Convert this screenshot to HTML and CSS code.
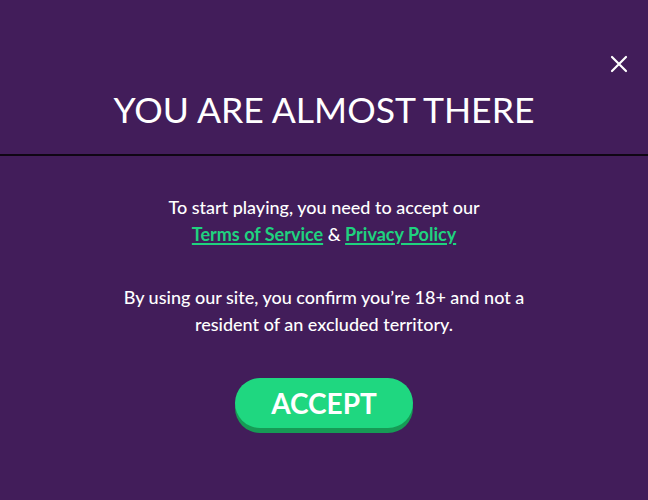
FILE: index.html
```html
<!DOCTYPE html>
<html>
<head>
<meta charset="utf-8">
<link rel="stylesheet" href="styles.css">
</head>
<body>
<div class="modal">
  <button class="close" aria-label="Close">
    <svg width="18" height="18" viewBox="0 0 18 18"><path d="M2 2L16 16M16 2L2 16" stroke="#fff" stroke-width="2.2" stroke-linecap="round"/></svg>
  </button>
  <h1 class="title">YOU ARE ALMOST THERE</h1>
  <div class="divider"></div>
  <p class="text first">To start playing, you need to accept our<br><a href="#">Terms of Service</a> &amp; <a href="#">Privacy Policy</a></p>
  <p class="text second">By using our site, you confirm you’re 18+ and not a<br>resident of an excluded territory.</p>
  <div class="actions"><button class="accept">ACCEPT</button></div>
</div>
</body>
</html>
```
FILE: styles.css
```css
html, body { margin: 0; padding: 0; }
body {
  background: #421d5a;
  width: 648px;
  height: 500px;
  overflow: hidden;
  font-family: "Lato", "Noto Sans", sans-serif;
  color: #fff;
}
.modal {
  position: relative;
  display: flex;
  flex-direction: column;
  align-items: stretch;
  padding-top: 88px;
}
.close {
  position: absolute;
  top: 55px;
  right: 20px;
  width: 18px;
  height: 18px;
  padding: 0;
  border: 0;
  background: none;
  display: flex;
}
.title {
  margin: 0;
  text-align: center;
  font-size: 35.6px;
  font-weight: 400;
  line-height: 44px;
  letter-spacing: 0;
}
.divider {
  height: 2px;
  background: #0f0614;
  margin-top: 22px;
}
.text {
  margin: 0;
  text-align: center;
  font-size: 18px;
  line-height: 27px;
  font-weight: 500;
}
.first { margin-top: 38px; }
.second { margin-top: 36px; }
.text a {
  color: #1fd27f;
  font-weight: 700;
  text-decoration: underline;
  text-decoration-thickness: 2px;
  text-underline-offset: 2px;
}
.actions {
  display: flex;
  justify-content: center;
  margin-top: 40px;
}
.accept {
  width: 178px;
  height: 50px;
  border: 0;
  border-radius: 25px;
  background: #1fd780;
  box-shadow: 0 5px 0 #169b55;
  color: #fff;
  font-family: "Lato", "Noto Sans", sans-serif;
  font-weight: 700;
  font-size: 28px;
  letter-spacing: 0;
  padding: 0;
}
```
